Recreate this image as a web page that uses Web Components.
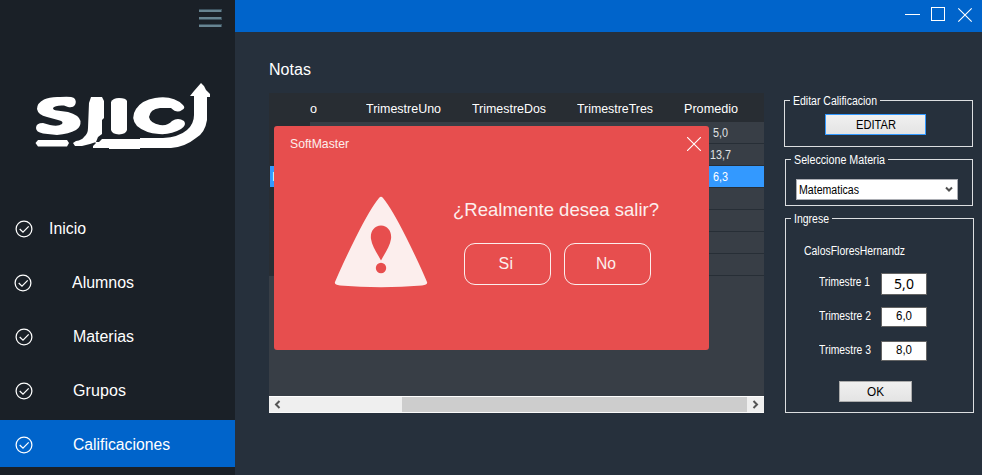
<!DOCTYPE html>
<html lang="es">
<head>
<meta charset="utf-8">
<title>SoftMaster</title>
<style>
body { margin: 0; background: #26303c; overflow: hidden; font-family: "Liberation Sans", Arial, sans-serif; color: #fff; }
</style>
</head>
<body>
<soft-app></soft-app>
<script>
const define = (name, html, setup) => {
  const tpl = document.createElement('template');
  tpl.innerHTML = html;
  customElements.define(name, class extends HTMLElement {
    connectedCallback() {
      if (this.shadowRoot) return;
      this.attachShadow({ mode: 'open' }).append(tpl.content.cloneNode(true));
      if (setup) setup(this, this.shadowRoot);
    }
  });
};

// Label condensed (or tracked out) so that the text fills the width given in "w".
define('fit-text', `<style>
:host { display: block; white-space: nowrap; flex: none; }
span { display: inline-block; transform-origin: 0 50%; }
</style><span><slot></slot></span>`, (el, root) => {
  const w = parseFloat(el.getAttribute('w'));
  const span = root.querySelector('span');
  const natural = span.getBoundingClientRect().width;
  if (w && natural) {
    if (w < natural) span.style.transform = 'scaleX(' + w / natural + ')';
    else span.style.letterSpacing = ((w - natural) / el.textContent.length) + 'px';
    el.style.width = w + 'px';
  }
});

define('school-logo', `<style>:host { display: block; width: 176px; height: 68px; } svg { display: block; }</style>
<svg width="176" height="68" viewBox="35 82 176 68" fill="#fff">
<path d="M74 98Q77 101 75 105Q73 108 68 107L64 105.500Q55 105 53 108Q53 110 57 110.500L68 112Q79 115 80.500 121Q81 127 76 130Q69 134 57 135L43 133.500Q36 132 36 128Q36 123 43 123L50 125Q58 127 62 124Q64 121 58 120L47 117Q38 115 37 109Q37 103 44 99.500Q50 96.500 60 97Q71 96 74 98Z"/>
<path d="M38 140H67L69 143L67 146.500H38L35.500 143Z"/>
<path d="M91 97H102L104 101V118L102 120V134L98 137L96 142L90 144L82 146H75L73 143L76 141Q82 140 84 137Q88 134 88 128L89 103Z"/>
<path d="M111 102Q113 98 119 98Q126 98 127 101V130Q126 134 119 134.500Q112 134 111 130V107Z"/>
<path d="M183 105Q186 108 182 110Q177 114 171 108H160Q150 109 149 117Q150 123 160 125Q168 126 172 121Q178 117 184 121Q187 125 181 129Q171 135 159 134Q145 133 137 126Q130 118 136 109Q142 100 155 98Q173 95 183 105Z"/>
<path d="M201 83L204 86L206 90L210 94V97H207V120Q205 133 196 138Q185 147 171 148H140V149H109V148H93V146L96 143L95 142H99L102 139H140V138H163Q179 137 187 130Q194 124 194 115V96H190L194 91Z"/>
</svg>`);

define('check-icon', `<style>:host { display: block; width: 18px; height: 18px; } svg { display: block; }</style>
<svg width="18" height="18" viewBox="0 0 18 18" fill="none" stroke="#fff"><circle cx="9" cy="9" r="7.900" stroke-width="1.250"/><path d="M4.700 9L8 12.100L13.700 6.400" stroke-width="1.250"/></svg>`);

define('nav-item', `<style>
:host { display: flex; align-items: center; box-sizing: border-box; height: 47px; margin-bottom: 7px; padding: 2px 0 0 15px; font-size: 16px; line-height: 20px; }
:host([active]) { background: #0064cb; }
:host([shift]) { padding-left: 14px; }
::slotted(*) { margin-left: 40px; }
:host([top]) ::slotted(*) { margin-left: 16px; }
</style><check-icon></check-icon><slot></slot>`);

define('side-bar', `<style>
:host { display: flex; flex-direction: column; width: 235px; height: 475px; background: #1a2027; flex: none; }
.menu { display: block; align-self: flex-end; margin: 9px 13px 0 0; }
school-logo { margin: 54px 0 54px 35px; }
</style>
<svg class="menu" width="23" height="19" viewBox="0 0 23 19" shape-rendering="crispEdges"><path d="M0 0H23V3H0ZM0 8H23V11H0ZM0 15H23V18H0Z" fill="#3c515d"/><path d="M0 0.500H22V3H0ZM0 8H22V10H0ZM0 16H22V18H0Z" fill="#678491"/></svg>
<school-logo></school-logo>
<nav>
<nav-item top><fit-text w="37">Inicio</fit-text></nav-item>
<nav-item shift><fit-text w="62">Alumnos</fit-text></nav-item>
<nav-item><fit-text w="61">Materias</fit-text></nav-item>
<nav-item><fit-text w="53">Grupos</fit-text></nav-item>
<nav-item active><fit-text w="97">Calificaciones</fit-text></nav-item>
</nav>`);

define('title-bar', `<style>
:host { display: flex; justify-content: flex-end; height: 32px; background: #0064cb; }
svg { display: block; }
</style><svg width="82" height="32" viewBox="900 0 82 32" fill="none" stroke="#fff"><path d="M905 14.500H920"/><rect x="931.500" y="7.500" width="13" height="13"/><path d="M958.300 8.300L971.700 21.700M971.700 8.300L958.300 21.700" stroke-width="1.100"/></svg>`);

define('grade-row', `<style>
:host { display: flex; height: 21px; border-bottom: 1px solid #272e36; background: #383e46; font-size: 12px; line-height: 22px; color: #e0e2e4; }
.head { width: 41px; background: #282d33; flex: none; box-sizing: border-box; padding-left: 3px; }
.value { flex: 1; display: flex; justify-content: center; padding-left: 367px; }
:host([selected]) { background: #3399ff; color: #fff; }
:host([selected]) .head { background: linear-gradient(90deg, #282d33 1px, #3399ff 1px); }
</style><div class="head"><slot name="head"></slot></div><div class="value"><slot></slot></div>`);

define('scroll-bar', `<style>
:host { display: flex; height: 17px; background: #efefef; box-sizing: border-box; border-top: 1px solid #fff; border-bottom: 1px solid #fafafa; }
svg { display: block; width: 17px; height: 15px; flex: none; }
.track { flex: 1; padding-left: 116px; }
.thumb { height: 15px; background: #cdcdcd; }
</style><svg viewBox="0 0 17 15" fill="none" stroke="#555" stroke-width="2"><path d="M10.500 4L7 7.500L10.500 11"/></svg><div class="track"><div class="thumb"></div></div><svg viewBox="0 0 17 15" fill="none" stroke="#555" stroke-width="2"><path d="M6.500 4L10 7.500L6.500 11"/></svg>`);

define('grade-table', `<style>
:host { display: flex; flex-direction: column; width: 495px; height: 320px; background: #383e46; }
header { display: grid; grid-template-columns: 56px 106px 105px 107px 80px; height: 29px; padding-left: 41px; background: #282d33; font-size: 13px; line-height: 31px; }
scroll-bar { margin-top: auto; }
</style>
<header><fit-text w="7">o</fit-text><fit-text w="75">TrimestreUno</fit-text><fit-text w="74">TrimestreDos</fit-text><fit-text w="76">TrimestreTres</fit-text><fit-text w="54">Promedio</fit-text></header>
<grade-row><fit-text w="15">5,0</fit-text></grade-row>
<grade-row><fit-text w="21">13,7</fit-text></grade-row>
<grade-row selected><span slot="head">I</span><fit-text w="15">6,3</fit-text></grade-row>
<grade-row></grade-row><grade-row></grade-row><grade-row></grade-row><grade-row></grade-row>
<scroll-bar></scroll-bar>`);

define('group-box', `<style>
:host { display: block; box-sizing: border-box; width: 189px; border: 1px solid #dcdee0; font-size: 12px; line-height: 14px; }
.legend { display: table; margin: -7px 0 0 5px; padding: 0 3px; background: #26303c; }
</style><div class="legend"><slot name="legend"></slot></div><slot></slot>`);

define('push-button', `<style>
:host { display: flex; justify-content: center; align-items: center; box-sizing: border-box; width: 73px; height: 21px; border: 1px solid #acacac; background: linear-gradient(#f0f0f0, #e4e4e4); color: #000; font-size: 12px; }
:host([focused]) { width: 101px; border-color: #3399ff; }
</style><slot></slot>`);

define('select-box', `<style>
:host { display: flex; align-items: center; justify-content: space-between; box-sizing: border-box; width: 162px; height: 21px; border: 1px solid #abadb3; background: #fff; color: #000; padding: 0 4px 0 2px; }
</style><slot></slot><svg width="8" height="7" viewBox="0 0 8 7" fill="none" stroke="#505050" stroke-width="2"><path d="M1 1.500L4 4.500L7 1.500"/></svg>`);

define('grade-field', `<style>
:host { display: flex; height: 20px; margin: 0 0 14px 33px; }
.label { width: 62px; line-height: 18px; }
.box { display: flex; justify-content: center; box-sizing: border-box; width: 46px; height: 20px; border: 1px solid #646464; background: #fff; color: #000; line-height: 17px; }
:host([large]) { height: 22px; margin-bottom: 12px; }
:host([large]) .box { height: 22px; font: 14px/20px "Noto Sans", sans-serif; }
</style><div class="label"><slot name="label"></slot></div><div class="box"><slot></slot></div>`);

define('warning-icon', `<style>:host { display: block; } svg { display: block; }</style>
<svg width="94" height="92" viewBox="0 0 94 92"><path d="M45 2Q47 -0.500 49 2Q58 13 72 41Q85 67 93 86Q94 88.500 88 89.500Q47 93 6 89.500Q0 88.500 1 86Q9 67 22 41Q36 13 45 2Z" fill="#fceeed"/><path d="M47 29.500C54 29.500 58 36 57 43C56 50 51 57 47 64.500C43 57 38 50 37 43C36 36 40 29.500 47 29.500Z" fill="#e74e4e"/><circle cx="47" cy="72" r="5.200" fill="#e74e4e"/></svg>`);

define('round-button', `<style>
:host { display: flex; justify-content: center; align-items: center; box-sizing: border-box; width: 87px; height: 42px; border: 1px solid #fceeed; border-radius: 11px; font-size: 16px; padding-right: 3px; }
</style><slot></slot>`);

define('exit-dialog', `<style>
:host { display: flex; flex-direction: column; box-sizing: border-box; width: 435px; height: 224px; background: #e74e4e; border-radius: 3px; color: #fceeed; }
header { display: flex; justify-content: space-between; height: 36px; padding: 0 8px 0 16px; font-size: 13px; line-height: 36px; }
header svg { display: block; margin-top: 11px; }
.body { display: flex; padding: 34px 0 0 60px; }
.ask { margin-left: 25px; }
.ask > fit-text { font-size: 19px; line-height: 26px; margin-top: 1px; }
.buttons { display: flex; gap: 13px; margin: 20px 0 0 11px; }
</style>
<header><fit-text w="59">SoftMaster</fit-text><svg width="14" height="14" viewBox="0 0 14 14" stroke="#fff" stroke-width="1.100"><path d="M0 0L14 14M14 0L0 14"/></svg></header>
<div class="body"><warning-icon></warning-icon><div class="ask"><fit-text w="206">¿Realmente desea salir?</fit-text><div class="buttons"><round-button><fit-text w="15">Si</fit-text></round-button><round-button><fit-text w="20">No</fit-text></round-button></div></div></div>`);

define('soft-app', `<style>
:host { display: flex; position: relative; width: 982px; height: 475px; background: #26303c; }
main { flex: 1; display: flex; flex-direction: column; }
.content { display: flex; padding-left: 34px; }
.notes > fit-text { font-size: 16px; line-height: 20px; margin: 28px 0 13px; }
aside { margin: 68px 0 0 20px; }
.first { height: 47px; margin-bottom: 12px; }
.first push-button { margin: 6px 0 0 40px; }
.second { height: 47px; margin: 0 0 12px 1px; width: 188px; }
.second select-box { margin: 12px 0 0 10px; }
.third { height: 195px; margin-left: 1px; }
.name { margin: 18px 0 15px 18px; }
.third push-button { margin: 20px 0 0 53px; }
exit-dialog { position: absolute; left: 274px; top: 126px; }
</style>
<side-bar></side-bar>
<main><title-bar></title-bar>
<div class="content">
<section class="notes"><fit-text w="42">Notas</fit-text><grade-table></grade-table></section>
<aside>
<group-box class="first"><fit-text slot="legend" w="84">Editar Calificacion</fit-text><push-button focused><fit-text w="40">EDITAR</fit-text></push-button></group-box>
<group-box class="second"><fit-text slot="legend" w="91">Seleccione Materia</fit-text><select-box><fit-text w="60">Matematicas</fit-text></select-box></group-box>
<group-box class="third"><fit-text slot="legend" w="35">Ingrese</fit-text>
<fit-text class="name" w="101">CalosFloresHernandz</fit-text>
<grade-field large><fit-text slot="label" w="51">Trimestre 1</fit-text><fit-text w="20">5,0</fit-text></grade-field>
<grade-field><fit-text slot="label" w="52">Trimestre 2</fit-text><fit-text w="16">6,0</fit-text></grade-field>
<grade-field><fit-text slot="label" w="52">Trimestre 3</fit-text><fit-text w="16">8,0</fit-text></grade-field>
<push-button><fit-text w="17">OK</fit-text></push-button></group-box>
</aside>
</div></main>
<exit-dialog></exit-dialog>`);
</script>
</body>
</html>
